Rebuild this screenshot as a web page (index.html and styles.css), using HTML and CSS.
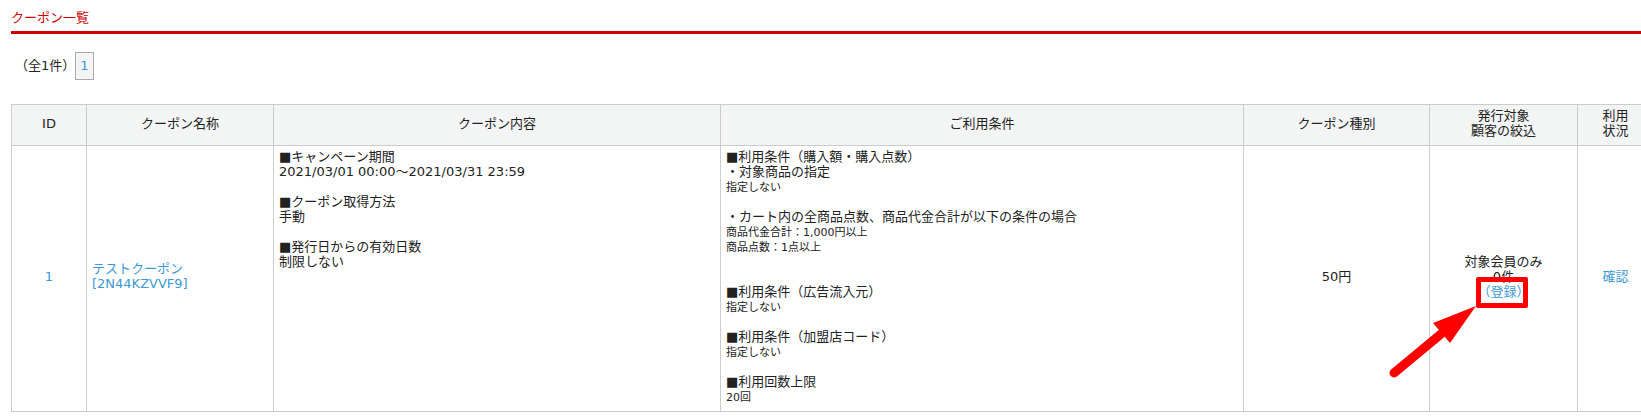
FILE: index.html
```html
<!DOCTYPE html>
<html lang="ja">
<head>
  <meta charset="UTF-8">
  <title>クーポン一覧</title>
  <link rel="stylesheet" href="styles.css">
</head>
<body>
  <div class="page">
    <h2 class="page-title">クーポン一覧</h2>

    <!-- Pager -->
    <div class="pager">
      <span class="pager-count">（全1件）</span>
      <a class="pager-num" href="#">1</a>
    </div>

    <table class="coupon-table">
      <colgroup>
        <col class="col-id">
        <col class="col-name">
        <col class="col-body">
        <col class="col-terms">
        <col class="col-type">
        <col class="col-target">
        <col class="col-status">
      </colgroup>
      <thead>
        <tr>
          <th>ID</th>
          <th>クーポン名称</th>
          <th>クーポン内容</th>
          <th>ご利用条件</th>
          <th>クーポン種別</th>
          <th>発行対象<br>顧客の絞込</th>
          <th>利用<br>状況</th>
        </tr>
      </thead>
      <tbody>
        <tr>
          <td class="center"><a href="#">1</a></td>
          <td class="name"><a href="#">テストクーポン<br>[2N44KZVVF9]</a></td>
          <td class="top">
            ■キャンペーン期間<br>
            2021/03/01 00:00～2021/03/31 23:59<br>
            <br>
            ■クーポン取得方法<br>
            手動<br>
            <br>
            ■発行日からの有効日数<br>
            制限しない
          </td>
          <td class="top">
            ■利用条件（購入額・購入点数）<br>
            ・対象商品の指定<br>
            <small>指定しない</small><br>
            <br>
            ・カート内の全商品点数、商品代金合計が以下の条件の場合<br>
            <small>商品代金合計：1,000円以上</small><br>
            <small>商品点数：1点以上</small><br>
            <br>
            <br>
            ■利用条件（広告流入元）<br>
            <small>指定しない</small><br>
            <br>
            ■利用条件（加盟店コード）<br>
            <small>指定しない</small><br>
            <br>
            ■利用回数上限<br>
            <small>20回</small>
          </td>
          <td class="center">50円</td>
          <td class="center">対象会員のみ<br>0件<br><a href="#">（登録）</a></td>
          <td class="center"><a href="#">確認</a></td>
        </tr>
      </tbody>
    </table>
  </div>

  <!-- Annotation drawn over the screenshot -->
  <div class="mark-box"></div>
  <svg class="mark-arrow" width="1641" height="419" viewBox="0 0 1641 419">
    <path d="M1394 373L1441 334" stroke="#f00" stroke-width="9" stroke-linecap="round" fill="none"/>
    <path d="M1476 306L1433 323L1450 343Z" fill="#f00"/>
  </svg>
</body>
</html>
```

FILE: styles.css
```css
html, body {
  margin: 0;
  padding: 0;
  height: 419px;
  overflow: hidden;
  background: #fff;
}
body {
  position: relative;
  font-family: "DejaVu Sans", "Noto Sans CJK JP", sans-serif;
  font-size: 13px;
  line-height: 15px;
  color: #222;
}
a {
  color: #3d98d4;
  text-decoration: none;
}
.page {
  padding-left: 11px;
}
.page-title {
  margin: 0;
  height: 31px;
  border-bottom: 3px solid #c00;
  color: #c00;
  font-size: 13px;
  font-weight: normal;
  line-height: 35px;
}
/* Pager */
.pager {
  display: flex;
  align-items: center;
  margin-top: 18px;
  height: 28px;
}
.pager-count {
  width: 64px;
  padding: 0 0 2px 4px;
  box-sizing: border-box;
}
.pager-num {
  display: block;
  width: 19px;
  height: 28px;
  line-height: 26px;
  box-sizing: border-box;
  border: 1px solid #aaa;
  background: #f3f5f4;
  text-align: center;
}
/* Table */
.coupon-table {
  table-layout: fixed;
  width: 1642px;
  margin-top: 24px;
  border-collapse: collapse;
}
.col-id { width: 75px; }
.col-name { width: 187px; }
.col-body { width: 447px; }
.col-terms { width: 523px; }
.col-type { width: 186px; }
.col-target { width: 148px; }
.col-status { width: 76px; }
.coupon-table th,
.coupon-table td {
  border: 1px solid #ccc;
  padding: 2px 5px 6px;
}
.coupon-table th {
  height: 32px;
  background: #f3f5f4;
  font-weight: normal;
  text-align: center;
}
.coupon-table td {
  height: 257px;
  vertical-align: middle;
}
.coupon-table td.center {
  text-align: center;
}
.coupon-table td.name {
  padding: 1px 5px 7px;
}
.coupon-table td.top {
  padding: 3px 5px 5px;
  vertical-align: top;
}
small {
  font-size: 11px;
  line-height: 1;
}
/* Annotation */
.mark-box {
  position: absolute;
  left: 1476px;
  top: 277px;
  width: 52px;
  height: 31px;
  box-sizing: border-box;
  border: 5px solid #f00;
  border-radius: 2px;
}
.mark-arrow {
  position: absolute;
  left: 0;
  top: 0;
}
```
